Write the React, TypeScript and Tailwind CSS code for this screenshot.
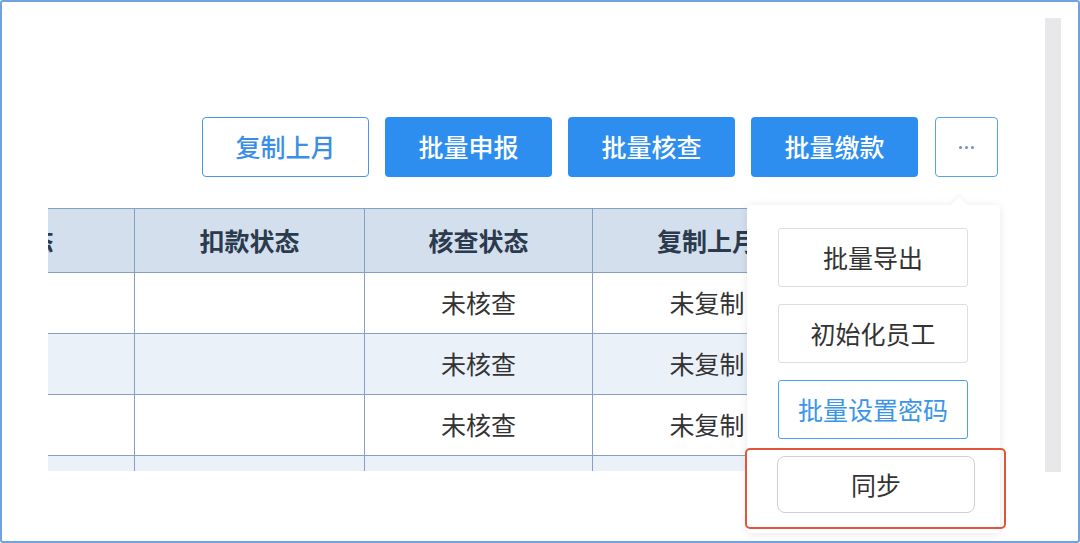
import React from 'react';

const columns = [
    { key: 'jk', title: '缴款状态', width: 'w-[262px]' },
    { key: 'kk', title: '扣款状态', width: 'w-[230px]' },
    { key: 'hc', title: '核查状态', width: 'w-[228px]' },
    { key: 'fz', title: '复制上月', width: 'w-[229px]' },
    { key: 'ex', title: '', width: 'w-[229px]' },
] as const;

type Row = Record<(typeof columns)[number]['key'], string>;

const rows: Row[] = [
    { jk: '', kk: '', hc: '未核查', fz: '未复制', ex: '' },
    { jk: '', kk: '', hc: '未核查', fz: '未复制', ex: '' },
    { jk: '', kk: '', hc: '未核查', fz: '未复制', ex: '' },
    // only the top of this row shows, the rest is cut by the table box
    { jk: '', kk: '', hc: '', fz: '', ex: '' },
];

const fontStack = "font-['Noto_Sans_CJK_SC','Noto_Sans',sans-serif]";

const Toolbar: React.FC = () => (
    <div className="flex justify-end items-center gap-4">
        <button className="w-[167px] h-[60px] rounded-[4px] border-[1.5px] border-[#4a96e4] bg-white text-[#3a8ee6] text-[25px] font-medium">复制上月</button>
        {['批量申报', '批量核查', '批量缴款'].map(label => (
            <button key={label} className="w-[167px] h-[60px] rounded-[4px] bg-[#2d8ef0] text-white text-[25px] font-medium">{label}</button>
        ))}
        <button className="ml-px w-[63px] h-[60px] rounded-[4px] border-[1.5px] border-[#5aa0e8] bg-white flex items-center justify-center gap-[3px]">
            <span className="w-[3px] h-[3px] rounded-full bg-[#6a94c8]" />
            <span className="w-[3px] h-[3px] rounded-full bg-[#6a94c8]" />
            <span className="w-[3px] h-[3px] rounded-full bg-[#6a94c8]" />
        </button>
    </div>
);

const DataTable: React.FC = () => (
    <div className="mt-[31px] h-[263px] overflow-hidden">
        <div className="-ml-[175px] w-max">
            <div className="flex h-[65px] bg-[#d4dfee] border-t border-b border-[#859fc6]">
                {columns.map(c => (
                    <div key={c.key} className={`${c.width} shrink-0 border-r border-[#859fc6] flex items-center justify-center font-bold text-[#2b3a4d] text-[25px]`}>{c.title}</div>
                ))}
            </div>
            {rows.map((r, i) => (
                <div key={i} className={`flex h-[61px] border-b border-[#859fc6] ${i % 2 === 1 ? 'bg-[#ebf1f9]' : 'bg-white'}`}>
                    {columns.map(c => (
                        <div key={c.key} className={`${c.width} shrink-0 border-r border-[#859fc6] flex items-center justify-center text-[#333] text-[25px]`}>{r[c.key]}</div>
                    ))}
                </div>
            ))}
        </div>
    </div>
);

const MoreMenu: React.FC = () => (
    <div className="absolute left-[745px] top-[203px] w-[253px] h-[328px] bg-white rounded-[4px] shadow-[0_1px_8px_rgba(0,0,0,0.10)]">
        <div className="absolute -top-[6px] left-[206px] w-[12px] h-[12px] bg-white rotate-45 shadow-[-2px_-2px_4px_rgba(0,0,0,0.04)]" />
        <div className="relative pt-[23px] pl-[31px] flex flex-col gap-[17px]">
            <button className="w-[190px] h-[59px] rounded-[3px] border border-[#dcdee2] bg-white text-[#333] text-[25px]">批量导出</button>
            <button className="w-[190px] h-[59px] rounded-[3px] border border-[#dcdee2] bg-white text-[#333] text-[25px]">初始化员工</button>
            <button className="w-[190px] h-[59px] rounded-[3px] border-[1.5px] border-[#4aa2ee] bg-white text-[#3a95ea] text-[25px]">批量设置密码</button>
            <button className="-ml-px w-[198px] h-[57px] rounded-[8px] border-[1.5px] border-[#cfcfcf] bg-white text-[#333] text-[25px]">同步</button>
        </div>
    </div>
);

export default function App() {
    return (
        <div className={`relative w-[1080px] h-[543px] bg-white border-2 border-[#6ea3df] rounded-[3px] overflow-hidden flex ${fontStack}`}>
            <div className="flex-1 min-w-0 pl-[46px] pr-[47px] pt-[115px]">
                <Toolbar />
                <DataTable />
            </div>
            <div className="shrink-0 mt-[16px] mr-[17px] w-[16px] h-[454px] bg-[#e8e8ea]" />
            <MoreMenu />
            <div className="absolute left-[743px] top-[446px] w-[261px] h-[81px] border-2 border-[#e2553a] rounded-[5px]" />
        </div>
    );
}
